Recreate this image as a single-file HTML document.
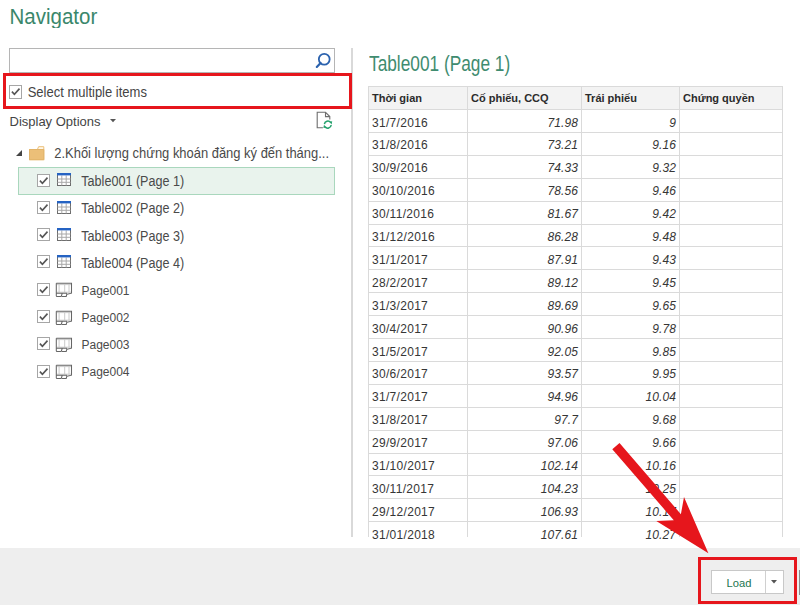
<!DOCTYPE html>
<html><head><meta charset="utf-8">
<style>
*{margin:0;padding:0;box-sizing:border-box}
html,body{width:800px;height:605px;overflow:hidden;background:#fff;font-family:"Liberation Sans",sans-serif;color:#444}
.a{position:absolute}
.t{position:absolute;white-space:nowrap;line-height:1}
#title{left:9.5px;top:5px;font-size:20.5px;color:#3a876b;transform:scaleY(1.09);transform-origin:0 0}
#search{left:9px;top:48px;width:326px;height:25px;border:1px solid #b5b5b5;background:#fff}
#split{left:351px;top:48px;width:2px;height:489px;background:#d9d9d9}
.cb{position:absolute;width:13px;height:13px;border:1px solid #a6a6a6;background:#fff}
.cb svg{position:absolute;left:0;top:0}
.redbox{position:absolute;border:3px solid #e6161c}
#sel{left:17.5px;top:167px;width:317px;height:28px;border:1px solid #a9d7bd;background:#e9f3ed}
.row{position:absolute;left:0;width:340px;height:27px}
.tree{font-size:12.3px;color:#4a4a4a;transform-origin:0 0}
#tbl{left:368px;top:86px;width:415px;height:453px;overflow:hidden}
.hl{position:absolute;left:0;width:415px;height:1px;background:#dadada}
.vl{position:absolute;top:0;width:1px;height:451px;background:#dadada}
.c{position:absolute;white-space:nowrap;line-height:1;font-size:12px;color:#333;letter-spacing:0.3px;color:#363636}
.h{font-weight:bold;font-size:11px;color:#2b2b2b;letter-spacing:0}
.n{font-style:italic;text-align:right;letter-spacing:0.1px}
#bar{left:0;top:548px;width:800px;height:57px;background:#eeeeee}
</style></head><body>
<div class="t" id="title">Navigator</div>
<div class="a" id="search"></div>
<svg class="a" style="left:314px;top:51px" width="20" height="20" viewBox="0 0 20 20"><circle cx="10.25" cy="8.2" r="5.4" fill="none" stroke="#2b62ae" stroke-width="1.8"/><line x1="6.6" y1="12" x2="2.8" y2="15.9" stroke="#2b62ae" stroke-width="2.2" stroke-linecap="round"/></svg>
<div class="a" id="split"></div>

<!-- select multiple items -->
<div class="cb" style="left:9px;top:85px;height:14px"><svg width="13" height="13" viewBox="0 0 13 13"><polyline points="1.9,5.6 4.4,8.3 9.5,2.6" fill="none" stroke="#555" stroke-width="1.6"/></svg></div>
<div class="t" style="left:27.7px;top:84.8px;font-size:13px;color:#444;transform:scaleY(1.08);transform-origin:0 0">Select multiple items</div>
<div class="redbox" style="left:3px;top:73px;width:349px;height:36px"></div>

<div class="t" style="left:9.5px;top:115px;font-size:13px;color:#444">Display Options</div>
<svg class="a" style="left:109.5px;top:119px" width="7" height="4"><polygon points="0,0 6,0 3,3.2" fill="#555"/></svg>
<!-- refresh icon -->
<svg class="a" style="left:314px;top:110px" width="20" height="22" viewBox="0 0 20 22"><path d="M8.9 17.8 H3.2 V2.3 H11.5 L15.8 6.6 V9.4 M11.5 2.3 V6.6 H15.8" fill="none" stroke="#6e6e6e" stroke-width="1.1"/><path d="M10.4 14.2 A3.5 3.5 0 0 1 16.6 12.4" fill="none" stroke="#22a06b" stroke-width="1.5"/><polygon points="15.2,11.8 18.2,11.2 17.6,14.4" fill="#22a06b"/><path d="M17.2 15 A3.5 3.5 0 0 1 11 16.8" fill="none" stroke="#22a06b" stroke-width="1.5"/><polygon points="12.4,17.4 9.4,18 10,14.8" fill="#22a06b"/></svg>

<!-- tree -->
<svg class="a" style="left:16px;top:150px" width="7" height="7"><polygon points="6,0 6,6 0,6" fill="#444"/></svg>
<svg class="a" style="left:29px;top:146px" width="16" height="15" viewBox="0 0 16 15"><path d="M0 3 H15.3 V14.2 H0 Z" fill="#ecbf78"/><path d="M8.6 3 L9.6 0.7 H14.8 V3" fill="#fff8ea" stroke="#ecbf78" stroke-width="1"/><path d="M0.5 3.5 H14.8 V13.7 H0.5 Z" fill="none" stroke="#e2b46a" stroke-width="1"/></svg>
<div class="t tree" style="left:54.3px;top:146.8px;font-size:12.95px;transform:scaleY(1.08)">2.Khối lượng chứng khoán đăng ký đến tháng...</div>

<div class="a" id="sel"></div>
<div class="cb" style="left:37px;top:173.5px"><svg width="13" height="13" viewBox="0 0 13 13"><polyline points="1.9,5.6 4.4,8.3 9.5,2.6" fill="none" stroke="#555" stroke-width="1.6"/></svg></div>
<svg class="a" style="left:56.5px;top:173.2px" width="14" height="13" viewBox="0 0 14 13"><rect x="0.5" y="0.5" width="13" height="12" fill="#fff" stroke="#6d6d6d" stroke-width="1"/><path d="M4.8 2.5 V12.5 M9.2 2.5 V12.5 M0.5 6 H13.5 M0.5 9.3 H13.5" stroke="#a8a8a8" stroke-width="1"/><rect x="0" y="0" width="14" height="2.4" fill="#2563c3"/></svg>
<div class="t tree" style="left:81.3px;top:174.90px;font-size:12.6px;transform:scaleY(1.1)">Table001 (Page 1)</div>
<div class="cb" style="left:37px;top:200.8px"><svg width="13" height="13" viewBox="0 0 13 13"><polyline points="1.9,5.6 4.4,8.3 9.5,2.6" fill="none" stroke="#555" stroke-width="1.6"/></svg></div>
<svg class="a" style="left:56.5px;top:200.5px" width="14" height="13" viewBox="0 0 14 13"><rect x="0.5" y="0.5" width="13" height="12" fill="#fff" stroke="#6d6d6d" stroke-width="1"/><path d="M4.8 2.5 V12.5 M9.2 2.5 V12.5 M0.5 6 H13.5 M0.5 9.3 H13.5" stroke="#a8a8a8" stroke-width="1"/><rect x="0" y="0" width="14" height="2.4" fill="#2563c3"/></svg>
<div class="t tree" style="left:81.3px;top:202.20px;font-size:12.6px;transform:scaleY(1.1)">Table002 (Page 2)</div>
<div class="cb" style="left:37px;top:228.1px"><svg width="13" height="13" viewBox="0 0 13 13"><polyline points="1.9,5.6 4.4,8.3 9.5,2.6" fill="none" stroke="#555" stroke-width="1.6"/></svg></div>
<svg class="a" style="left:56.5px;top:227.8px" width="14" height="13" viewBox="0 0 14 13"><rect x="0.5" y="0.5" width="13" height="12" fill="#fff" stroke="#6d6d6d" stroke-width="1"/><path d="M4.8 2.5 V12.5 M9.2 2.5 V12.5 M0.5 6 H13.5 M0.5 9.3 H13.5" stroke="#a8a8a8" stroke-width="1"/><rect x="0" y="0" width="14" height="2.4" fill="#2563c3"/></svg>
<div class="t tree" style="left:81.3px;top:229.50px;font-size:12.6px;transform:scaleY(1.1)">Table003 (Page 3)</div>
<div class="cb" style="left:37px;top:255.4px"><svg width="13" height="13" viewBox="0 0 13 13"><polyline points="1.9,5.6 4.4,8.3 9.5,2.6" fill="none" stroke="#555" stroke-width="1.6"/></svg></div>
<svg class="a" style="left:56.5px;top:255.1px" width="14" height="13" viewBox="0 0 14 13"><rect x="0.5" y="0.5" width="13" height="12" fill="#fff" stroke="#6d6d6d" stroke-width="1"/><path d="M4.8 2.5 V12.5 M9.2 2.5 V12.5 M0.5 6 H13.5 M0.5 9.3 H13.5" stroke="#a8a8a8" stroke-width="1"/><rect x="0" y="0" width="14" height="2.4" fill="#2563c3"/></svg>
<div class="t tree" style="left:81.3px;top:256.80px;font-size:12.6px;transform:scaleY(1.1)">Table004 (Page 4)</div>
<div class="cb" style="left:37px;top:282.7px"><svg width="13" height="13" viewBox="0 0 13 13"><polyline points="1.9,5.6 4.4,8.3 9.5,2.6" fill="none" stroke="#555" stroke-width="1.6"/></svg></div>
<svg class="a" style="left:54px;top:280.30px" width="20" height="20" viewBox="0 0 20 20"><path d="M5.1 4.5 V12.2 M10.7 4.5 V12.2 M15 4.5 V12.2 M2.8 4.6 H17 M2.8 12.2 H17" fill="none" stroke="#c4c4c4" stroke-width="0.9"/><path d="M2.3 3.3 H17.5 V13.2 L13 14.2 M2.3 3.3 V15.8 Q2.3 16.5 3 16.5 H7.2 L8.2 13.5 M8 16.5 H12.2 L13 13.6 M2.3 13.3 H13" fill="none" stroke="#666" stroke-width="1.05"/></svg>
<div class="t tree" style="left:81.5px;top:283.50px;font-size:12px;transform:scaleY(1.07)">Page001</div>
<div class="cb" style="left:37px;top:310.0px"><svg width="13" height="13" viewBox="0 0 13 13"><polyline points="1.9,5.6 4.4,8.3 9.5,2.6" fill="none" stroke="#555" stroke-width="1.6"/></svg></div>
<svg class="a" style="left:54px;top:307.60px" width="20" height="20" viewBox="0 0 20 20"><path d="M5.1 4.5 V12.2 M10.7 4.5 V12.2 M15 4.5 V12.2 M2.8 4.6 H17 M2.8 12.2 H17" fill="none" stroke="#c4c4c4" stroke-width="0.9"/><path d="M2.3 3.3 H17.5 V13.2 L13 14.2 M2.3 3.3 V15.8 Q2.3 16.5 3 16.5 H7.2 L8.2 13.5 M8 16.5 H12.2 L13 13.6 M2.3 13.3 H13" fill="none" stroke="#666" stroke-width="1.05"/></svg>
<div class="t tree" style="left:81.5px;top:310.80px;font-size:12px;transform:scaleY(1.07)">Page002</div>
<div class="cb" style="left:37px;top:337.3px"><svg width="13" height="13" viewBox="0 0 13 13"><polyline points="1.9,5.6 4.4,8.3 9.5,2.6" fill="none" stroke="#555" stroke-width="1.6"/></svg></div>
<svg class="a" style="left:54px;top:334.90px" width="20" height="20" viewBox="0 0 20 20"><path d="M5.1 4.5 V12.2 M10.7 4.5 V12.2 M15 4.5 V12.2 M2.8 4.6 H17 M2.8 12.2 H17" fill="none" stroke="#c4c4c4" stroke-width="0.9"/><path d="M2.3 3.3 H17.5 V13.2 L13 14.2 M2.3 3.3 V15.8 Q2.3 16.5 3 16.5 H7.2 L8.2 13.5 M8 16.5 H12.2 L13 13.6 M2.3 13.3 H13" fill="none" stroke="#666" stroke-width="1.05"/></svg>
<div class="t tree" style="left:81.5px;top:338.10px;font-size:12px;transform:scaleY(1.07)">Page003</div>
<div class="cb" style="left:37px;top:364.6px"><svg width="13" height="13" viewBox="0 0 13 13"><polyline points="1.9,5.6 4.4,8.3 9.5,2.6" fill="none" stroke="#555" stroke-width="1.6"/></svg></div>
<svg class="a" style="left:54px;top:362.20px" width="20" height="20" viewBox="0 0 20 20"><path d="M5.1 4.5 V12.2 M10.7 4.5 V12.2 M15 4.5 V12.2 M2.8 4.6 H17 M2.8 12.2 H17" fill="none" stroke="#c4c4c4" stroke-width="0.9"/><path d="M2.3 3.3 H17.5 V13.2 L13 14.2 M2.3 3.3 V15.8 Q2.3 16.5 3 16.5 H7.2 L8.2 13.5 M8 16.5 H12.2 L13 13.6 M2.3 13.3 H13" fill="none" stroke="#666" stroke-width="1.05"/></svg>
<div class="t tree" style="left:81.5px;top:365.40px;font-size:12px;transform:scaleY(1.07)">Page004</div>

<!-- right -->
<div class="t" style="left:369px;top:52.7px;font-size:17.3px;color:#3f8c70;transform:scaleY(1.28);transform-origin:0 0">Table001 (Page 1)</div>
<div class="a" id="tbl">
<div class="a" style="left:0;top:0;width:415px;height:23px;background:#f3f3f3"></div>
<div class="hl" style="top:0"></div>
<div class="hl" style="top:23px"></div>
<div class="hl" style="top:45.9px"></div>
<div class="hl" style="top:68.8px"></div>
<div class="hl" style="top:91.7px"></div>
<div class="hl" style="top:114.6px"></div>
<div class="hl" style="top:137.5px"></div>
<div class="hl" style="top:160.4px"></div>
<div class="hl" style="top:183.3px"></div>
<div class="hl" style="top:206.2px"></div>
<div class="hl" style="top:229.1px"></div>
<div class="hl" style="top:252.0px"></div>
<div class="hl" style="top:274.9px"></div>
<div class="hl" style="top:297.8px"></div>
<div class="hl" style="top:320.7px"></div>
<div class="hl" style="top:343.6px"></div>
<div class="hl" style="top:366.5px"></div>
<div class="hl" style="top:389.4px"></div>
<div class="hl" style="top:412.3px"></div>
<div class="hl" style="top:435.2px"></div>
<div class="hl" style="top:458.1px"></div>
<div class="vl" style="left:0px"></div>
<div class="vl" style="left:99px"></div>
<div class="vl" style="left:213px"></div>
<div class="vl" style="left:311px"></div>
<div class="vl" style="left:414px"></div>
<div class="c h" style="left:4px;top:7px">Thời gian</div>
<div class="c h" style="left:103px;top:7px">Cố phiếu, CCQ</div>
<div class="c h" style="left:217px;top:7px">Trái phiếu</div>
<div class="c h" style="left:315px;top:7px">Chứng quyền</div>
<div class="c" style="left:4px;top:30.5px">31/7/2016</div>
<div class="c n" style="right:205px;top:30.5px">71.98</div>
<div class="c n" style="right:107px;top:30.5px">9</div>
<div class="c" style="left:4px;top:53.4px">31/8/2016</div>
<div class="c n" style="right:205px;top:53.4px">73.21</div>
<div class="c n" style="right:107px;top:53.4px">9.16</div>
<div class="c" style="left:4px;top:76.3px">30/9/2016</div>
<div class="c n" style="right:205px;top:76.3px">74.33</div>
<div class="c n" style="right:107px;top:76.3px">9.32</div>
<div class="c" style="left:4px;top:99.2px">30/10/2016</div>
<div class="c n" style="right:205px;top:99.2px">78.56</div>
<div class="c n" style="right:107px;top:99.2px">9.46</div>
<div class="c" style="left:4px;top:122.1px">30/11/2016</div>
<div class="c n" style="right:205px;top:122.1px">81.67</div>
<div class="c n" style="right:107px;top:122.1px">9.42</div>
<div class="c" style="left:4px;top:145.0px">31/12/2016</div>
<div class="c n" style="right:205px;top:145.0px">86.28</div>
<div class="c n" style="right:107px;top:145.0px">9.48</div>
<div class="c" style="left:4px;top:167.9px">31/1/2017</div>
<div class="c n" style="right:205px;top:167.9px">87.91</div>
<div class="c n" style="right:107px;top:167.9px">9.43</div>
<div class="c" style="left:4px;top:190.8px">28/2/2017</div>
<div class="c n" style="right:205px;top:190.8px">89.12</div>
<div class="c n" style="right:107px;top:190.8px">9.45</div>
<div class="c" style="left:4px;top:213.7px">31/3/2017</div>
<div class="c n" style="right:205px;top:213.7px">89.69</div>
<div class="c n" style="right:107px;top:213.7px">9.65</div>
<div class="c" style="left:4px;top:236.6px">30/4/2017</div>
<div class="c n" style="right:205px;top:236.6px">90.96</div>
<div class="c n" style="right:107px;top:236.6px">9.78</div>
<div class="c" style="left:4px;top:259.5px">31/5/2017</div>
<div class="c n" style="right:205px;top:259.5px">92.05</div>
<div class="c n" style="right:107px;top:259.5px">9.85</div>
<div class="c" style="left:4px;top:282.4px">30/6/2017</div>
<div class="c n" style="right:205px;top:282.4px">93.57</div>
<div class="c n" style="right:107px;top:282.4px">9.95</div>
<div class="c" style="left:4px;top:305.3px">31/7/2017</div>
<div class="c n" style="right:205px;top:305.3px">94.96</div>
<div class="c n" style="right:107px;top:305.3px">10.04</div>
<div class="c" style="left:4px;top:328.2px">31/8/2017</div>
<div class="c n" style="right:205px;top:328.2px">97.7</div>
<div class="c n" style="right:107px;top:328.2px">9.68</div>
<div class="c" style="left:4px;top:351.1px">29/9/2017</div>
<div class="c n" style="right:205px;top:351.1px">97.06</div>
<div class="c n" style="right:107px;top:351.1px">9.66</div>
<div class="c" style="left:4px;top:374.0px">31/10/2017</div>
<div class="c n" style="right:205px;top:374.0px">102.14</div>
<div class="c n" style="right:107px;top:374.0px">10.16</div>
<div class="c" style="left:4px;top:396.9px">30/11/2017</div>
<div class="c n" style="right:205px;top:396.9px">104.23</div>
<div class="c n" style="right:107px;top:396.9px">10.25</div>
<div class="c" style="left:4px;top:419.8px">29/12/2017</div>
<div class="c n" style="right:205px;top:419.8px">106.93</div>
<div class="c n" style="right:107px;top:419.8px">10.17</div>
<div class="c" style="left:4px;top:442.7px">31/01/2018</div>
<div class="c n" style="right:205px;top:442.7px">107.61</div>
<div class="c n" style="right:107px;top:442.7px">10.27</div>
</div>

<div class="a" id="bar"></div>
<div class="a" style="left:711px;top:570px;width:73px;height:24px;border:1px solid #c8c8c8;background:#fff"></div>
<div class="a" style="left:765px;top:571px;width:1px;height:22px;background:#d0d0d0"></div>
<div class="t" style="left:726.5px;top:577.5px;font-size:11.2px;color:#227650">Load</div>
<svg class="a" style="left:771px;top:580px" width="7" height="4"><polygon points="0,0 6,0 3,3.5" fill="#555"/></svg>
<div class="a" style="left:799px;top:570px;width:1px;height:25px;background:#8a8a8a"></div>
<div class="redbox" style="left:698px;top:557px;width:99px;height:47px"></div>
<svg class="a" style="left:0;top:0" width="800" height="605"><polygon points="619.5,443.0 680.9,514.2 684.0,497.0 708.4,553.3 656.3,520.9 673.8,520.3 612.3,449.2" fill="#e6161c"/></svg>
</body></html>
